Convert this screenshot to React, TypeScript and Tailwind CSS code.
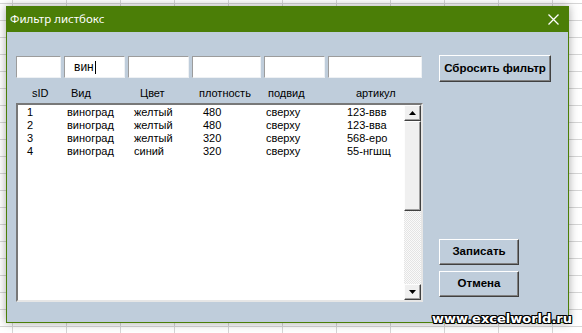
const rows = [
  ["1", "виноград", "желтый", "480", "сверху", "123-ввв"],
  ["2", "виноград", "желтый", "480", "сверху", "123-вва"],
  ["3", "виноград", "желтый", "320", "сверху", "568-еро"],
  ["4", "виноград", "синий", "320", "сверху", "55-нгшщ"],
];

const colWidths = ["w-[40px]", "w-[67px]", "w-[69px]", "w-[63px]", "w-[81px]", "flex-1"];
const headWidths = ["w-[39px]", "w-[69px]", "w-[59px]", "w-[69px]", "w-[88px]", "flex-1"];
const headers = ["sID", "Вид", "Цвет", "плотность", "подвид", "артикул"];
const inputWidths = ["w-[45px]", "w-[61px]", "w-[61px]", "w-[69px]", "w-[61px]", "w-[94px]"];

function TextBox({ width, value }: { width: string; value?: string }) {
  return (
    <div
      className={`${width} h-full bg-white border border-t-[#9c9c9c] border-l-[#9c9c9c] border-b-[#eef1f4] border-r-[#eef1f4] flex items-center pl-[9px] text-[12px] text-black`}
    >
      {value && (
        <>
          <span>{value}</span>
          <span className="w-px h-[13px] bg-black ml-px" />
        </>
      )}
    </div>
  );
}

function Button({ label, className }: { label: string; className: string }) {
  return (
    <div
      className={`${className} flex items-center justify-center bg-[#bfcddb] border border-t-white border-l-white border-b-[#404040] border-r-[#404040] shadow-[inset_-1px_-1px_0_#808080] font-bold text-[11.5px] text-black`}
    >
      {label}
    </div>
  );
}

function Arrow({ up }: { up?: boolean }) {
  return (
    <div className="h-[16px] bg-[#f0f0f0] border border-t-[#fdfdfd] border-l-[#fdfdfd] border-b-[#404040] border-r-[#404040] shadow-[inset_-1px_-1px_0_#a0a0a0] flex items-center justify-center">
      <svg width="7" height="4" viewBox="0 0 7 4">
        {up ? <polygon points="0,4 7,4 3.5,0" fill="#000" /> : <polygon points="0,0 7,0 3.5,4" fill="#000" />}
      </svg>
    </div>
  );
}

export default function App() {
  return (
    <div className="relative w-[582px] h-[333px] overflow-hidden bg-white bg-[linear-gradient(to_right,#d6d6d6_1px,transparent_1px),linear-gradient(to_bottom,#d6d6d6_1px,transparent_1px)] [background-size:54px_17px] [background-position:12px_3px] pt-[6px] pl-[6px] font-['Liberation_Sans',Arial,sans-serif]">
      <div className="w-[563px] h-[317px] flex flex-col shadow-[0_0_9px_rgba(0,0,0,0.35)]">
        {/* Title bar */}
        <div className="h-[26px] bg-[#4b7e07] flex items-center justify-between pl-[4px] pr-[10px]">
          <span className="text-white text-[11.5px] font-['Noto_Sans',sans-serif]">Фильтр листбокс</span>
          <svg width="11" height="11" viewBox="0 0 11 11">
            <path d="M0.5 0.5 L10.5 10.5 M10.5 0.5 L0.5 10.5" stroke="#fff" strokeWidth="1.3" />
          </svg>
        </div>

        {/* Body */}
        <div className="flex-1 flex bg-[#bfcddb] border-x border-b border-[#4b7e07] pl-[9px]">
          <div className="w-[407px] flex flex-col pt-[24px]">
            <div className="h-[22px] flex gap-[3px]">
              {inputWidths.map((w, i) => (
                <TextBox key={i} width={w} value={i === 1 ? "вин" : undefined} />
              ))}
            </div>

            <div className="mt-[8px] h-[14px] flex items-center pl-[16px] text-[11px] text-black">
              {headers.map((h, i) => (
                <span key={h} className={headWidths[i]}>
                  {h}
                </span>
              ))}
            </div>

            <div className="mt-[3px] h-[199px] flex bg-white border-2 border-t-[#787878] border-l-[#787878] border-b-[#e6e6e6] border-r-[#e6e6e6]">
              <div className="flex-1 pt-px text-[11px] text-black">
                {rows.map((r) => (
                  <div key={r[0]} className="h-[13px] flex items-center pl-[9px]">
                    {r.map((c, i) => (
                      <span key={i} className={colWidths[i]}>
                        {c}
                      </span>
                    ))}
                  </div>
                ))}
              </div>
              <div className="w-[17px] flex flex-col bg-[repeating-conic-gradient(#e4e4e4_0_25%,#fafafa_0_50%)] [background-size:2px_2px]">
                <Arrow up />
                <div className="h-[90px] bg-[#f0f0f0] border border-t-[#fdfdfd] border-l-[#fdfdfd] border-b-[#404040] border-r-[#404040] shadow-[inset_-1px_-1px_0_#a0a0a0]" />
                <div className="flex-1" />
                <Arrow />
              </div>
            </div>
          </div>

          <div className="ml-[16px] flex flex-col items-start pt-[23px]">
            <Button label="Сбросить фильтр" className="w-[112px] h-[27px]" />
            <Button label="Записать" className="w-[80px] h-[26px] mt-[157px]" />
            <Button label="Отмена" className="w-[80px] h-[26px] mt-[6px]" />
          </div>
        </div>
      </div>

      <span className="absolute right-[10px] bottom-[8px] text-[13px] font-bold text-white font-['DejaVu_Sans',Verdana,sans-serif] leading-none [text-shadow:1px_1px_0_#000,-1px_-1px_0_#000,1px_-1px_0_#000,-1px_1px_0_#000,0_1px_0_#000,0_-1px_0_#000,1px_0_0_#000,-1px_0_0_#000]">
        www.excelworld.ru
      </span>
    </div>
  );
}
